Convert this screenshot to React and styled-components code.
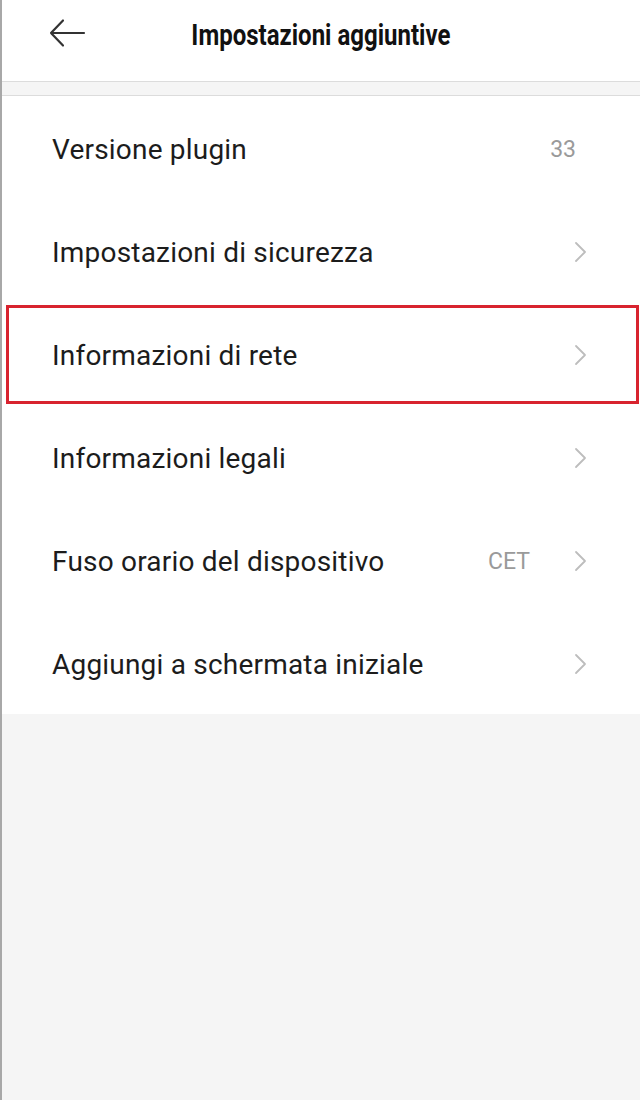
import React from 'react'
import styled, { createGlobalStyle } from 'styled-components'

const GlobalStyle = createGlobalStyle`
    html, body {
        margin: 0;
        padding: 0;
        background: #f5f5f5;
    }
    body {
        font-family: Roboto, "Liberation Sans", sans-serif;
    }
`

const Screen = styled.div`
    min-height: 1100px;
    background: #f5f5f5;
    border-left: 2px solid #a8a8a8;
    box-sizing: border-box;
`

const Header = styled.div`
    height: 81px;
    background: #fff;
    border-bottom: 1px solid #dcdcdc;
    display: flex;
    align-items: center;
    justify-content: center;
    position: relative;
`

const BackButton = styled.button`
    position: absolute;
    left: 44px;
    top: 16px;
    width: 42px;
    height: 34px;
    border: none;
    background: none;
    padding: 0;
    display: flex;
    align-items: center;
    justify-content: center;
    cursor: pointer;
`

const Title = styled.h1`
    margin: 0 0 12px;
    font-size: 30px;
    font-weight: 700;
    color: #111;
    transform: scaleX(0.8);
    white-space: nowrap;
`

const Spacer = styled.div`
    height: 13px;
    background: #f5f5f5;
    border-bottom: 1px solid #dcdcdc;
`

const List = styled.div`
    background: #fff;
`

const Row = styled.div`
    height: 103px;
    display: flex;
    align-items: center;
    padding: 3px 52px 0 50px;
    box-sizing: border-box;
    position: relative;
    ${p => p.$highlight && `
        &::after {
            content: "";
            position: absolute;
            left: 4px;
            right: 1px;
            top: 3px;
            bottom: 1px;
            border: 3px solid #d8232f;
        }
    `}
`

const Label = styled.span`
    flex: 1;
    font-size: 28px;
    color: #1c1c1c;
    letter-spacing: 0.2px;
`

const Value = styled.span`
    font-size: 23px;
    color: #9a9a9a;
    margin-right: ${p => (p.$withArrow ? '44px' : '12px')};
`

const Chevron = () => (
    <svg width="14" height="22" viewBox="0 0 14 22" fill="none">
        <path d="M2 2 L11 11 L2 20" stroke="#bdbdbd" strokeWidth="1.8" strokeLinecap="round" strokeLinejoin="round" />
    </svg>
)

const rows = [
    { label: 'Versione plugin', value: '33', arrow: false },
    { label: 'Impostazioni di sicurezza', arrow: true },
    { label: 'Informazioni di rete', arrow: true, highlight: true },
    { label: 'Informazioni legali', arrow: true },
    { label: 'Fuso orario del dispositivo', value: 'CET', arrow: true },
    { label: 'Aggiungi a schermata iniziale', arrow: true },
]

const App = () => {
    return (
        <Screen>
            <GlobalStyle />
            <Header>
                <BackButton aria-label="Indietro">
                    <svg width="38" height="30" viewBox="0 0 38 30" fill="none">
                        <path d="M3 15 H36 M15 2.5 L3 15 L15 27.5" stroke="#333" strokeWidth="2.2" strokeLinecap="round" strokeLinejoin="round" />
                    </svg>
                </BackButton>
                <Title>Impostazioni aggiuntive</Title>
            </Header>
            <Spacer />
            <List>
                {rows.map(r => (
                    <Row key={r.label} $highlight={r.highlight}>
                        <Label>{r.label}</Label>
                        {r.value && <Value $withArrow={r.arrow}>{r.value}</Value>}
                        {r.arrow && <Chevron />}
                    </Row>
                ))}
            </List>
        </Screen>
    )
}

export default App
